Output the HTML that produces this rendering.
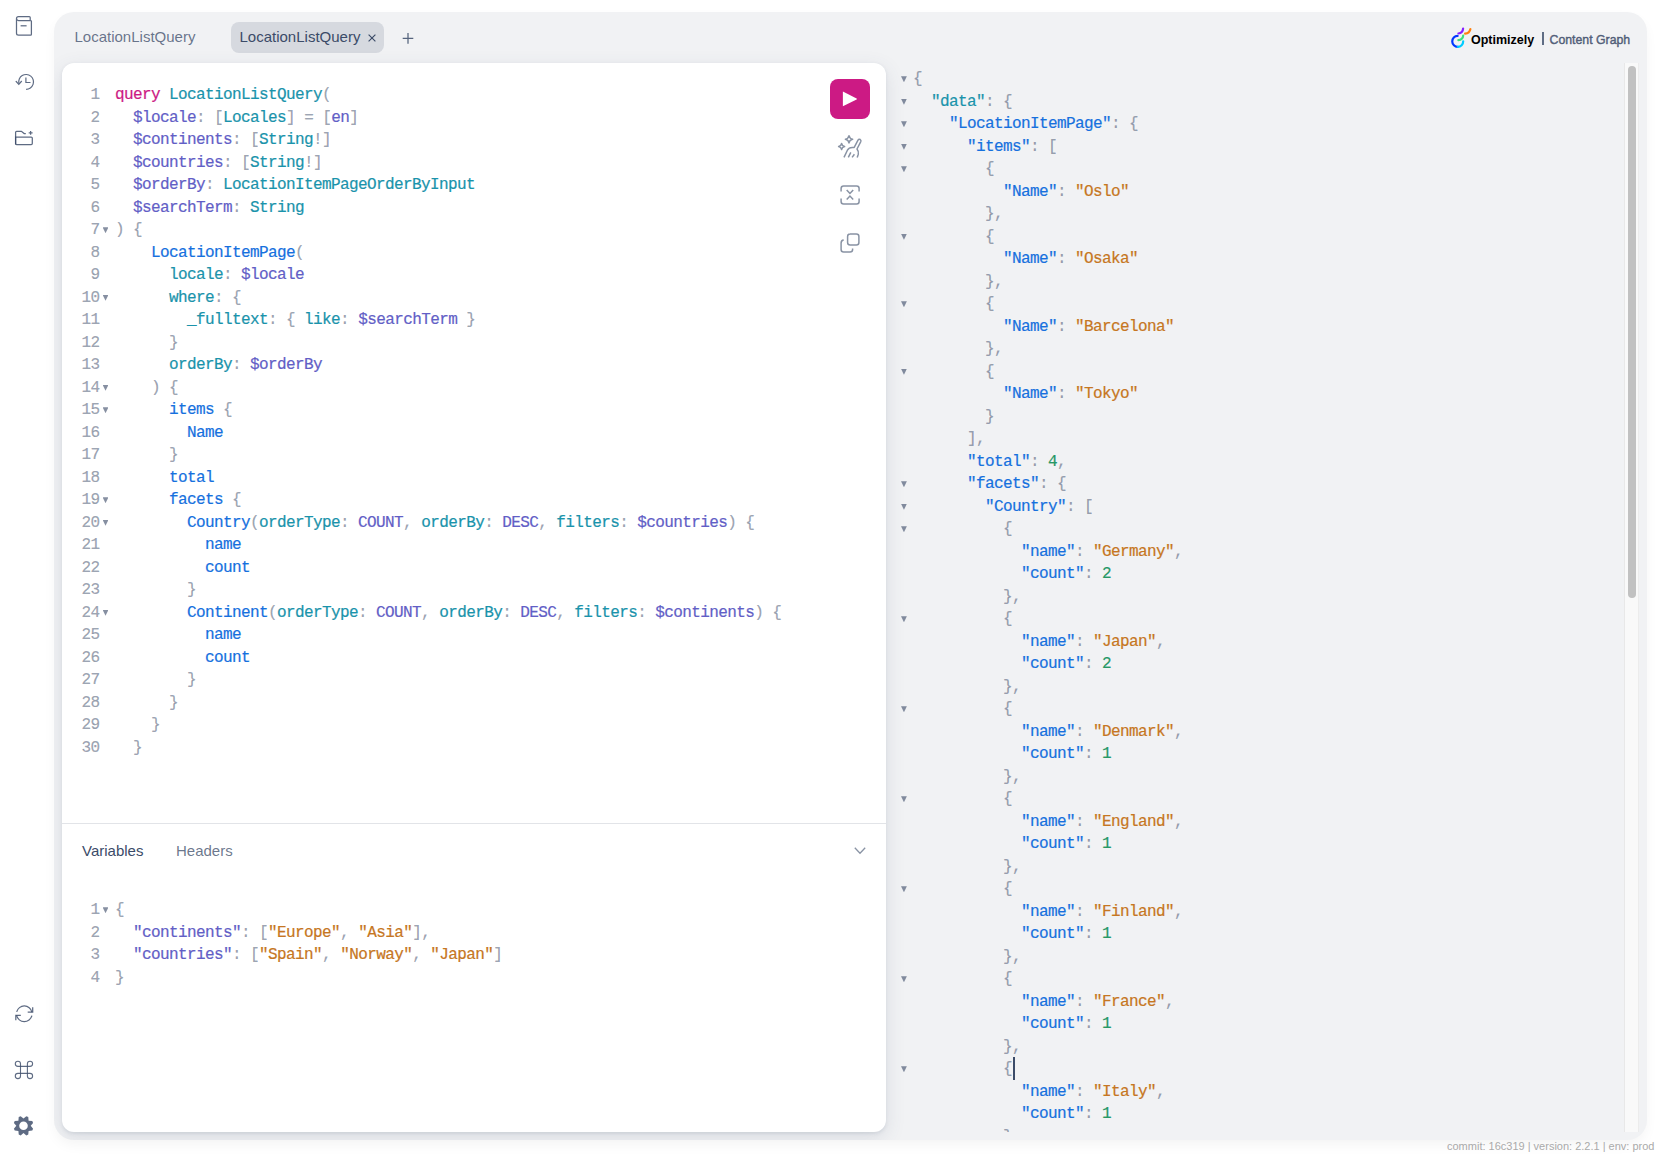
<!DOCTYPE html>
<html><head><meta charset="utf-8"><title>GraphiQL</title>
<style>
*{box-sizing:border-box;margin:0;padding:0}
html,body{width:1659px;height:1156px;overflow:hidden;background:#fff}
body{position:relative;font-family:"Liberation Sans",sans-serif;color:rgb(59,75,104)}
.abs{position:absolute}
.sidebar svg{position:absolute;overflow:visible}
.sessions{position:absolute;left:54px;top:12px;width:1593px;height:1128px;border-radius:20px;background:rgb(241,242,244);box-shadow:0 6px 14px -2px rgba(0,0,0,.05)}
.tab{position:absolute;font-size:15px;line-height:17px;white-space:nowrap}
.tab1{left:74.5px;top:27.7px;color:rgba(59,75,104,.76)}
.tab2bg{position:absolute;left:231px;top:22px;width:153px;height:31px;border-radius:8px;background:rgb(214,217,223)}
.tab2{left:239.5px;top:27.7px;color:rgb(59,75,104)}
.editors{position:absolute;left:62px;top:63px;width:824px;height:1069px;border-radius:12px;background:#fff;box-shadow:0px 6px 20px rgba(59,76,106,.13),0px 1.2px 3.6px rgba(59,76,106,.1);overflow:hidden;clip-path:inset(-51px -200px -8px -8px round 20px)}
.qsep{position:absolute;left:0;top:760px;width:824px;height:1px;background:rgb(226,228,232)}
.ln{position:absolute;left:0;height:22.5px;line-height:22.5px;font-family:"Liberation Mono",monospace;font-size:16px;letter-spacing:-0.6px;white-space:pre;-webkit-text-stroke:0.2px currentColor}
.num{position:absolute;left:0;width:37.6px;text-align:right;color:rgba(59,75,104,.5)}
.fold{position:absolute;left:40.6px;top:8.2px;width:5.9px;height:6px;background:rgba(59,75,104,.62);clip-path:polygon(0 0,100% 0,50% 100%)}
.code{position:absolute;left:53px}
.res .fold{left:15px;width:5.9px}
.res .code{left:27px}
.k{color:rgb(204,26,132)}
.d{color:rgb(26,147,171)}
.p{color:rgb(22,112,222)}
.a{color:rgb(26,147,171)}
.t{color:rgb(26,147,171)}
.v{color:rgb(98,94,198)}
.e{color:rgb(98,94,198)}
.u{color:rgba(59,75,104,.5)}
.s{color:rgb(198,118,34)}
.n{color:rgb(38,152,102)}
.qlines{position:absolute;left:0;top:21px}
.vlines{position:absolute;left:0;top:836px}
.response{position:absolute;left:886px;top:63px;width:753px;height:1069px;overflow:hidden}
.res{position:absolute;left:0;top:5px}
.toolbar svg{position:absolute;overflow:visible}
.play{position:absolute;left:768px;top:16px;width:40px;height:40px;border-radius:8px;background:rgb(204,26,132)}
.etab{position:absolute;top:778.7px;font-size:15px;line-height:17px}
.scrolltrack{position:absolute;left:1624px;top:63px;width:15px;height:1069px;background:#f9f9f9;border-left:1px solid #e8e8e8;border-right:1px solid #ececec}
.thumb{position:absolute;left:1628px;top:66px;width:8px;height:532px;border-radius:4px;background:#c1c1c1}
.cursor{position:absolute;left:1013px;top:1057px;width:2px;height:22.5px;background:rgb(59,75,104)}
.footer{position:absolute;left:1447px;top:1140px;font-size:11px;line-height:13px;color:#aaa;white-space:nowrap}
.brand{position:absolute;left:1471px;top:32.5px;font-size:12.5px;font-weight:700;color:#000;line-height:14px}
.brandsep{position:absolute;left:1542px;top:32px;width:1.8px;height:12.6px;background:rgba(59,75,104,.8)}
.cg{position:absolute;left:1549.5px;top:32.6px;font-size:12.3px;font-weight:400;-webkit-text-stroke:0.5px rgba(59,75,104,.8);color:rgba(59,75,104,.8);line-height:14px;white-space:nowrap}

</style></head><body>
<div class="sidebar">
<svg style="left:0;top:0" width="48" height="160" viewBox="0 0 48 160" fill="none" stroke="rgba(59,75,104,.82)" stroke-width="1.25">
  <path d="M16.5 18.6C16.5 19.7 17.4 20.5 18.5 20.5H30.2M16.5 18.6C16.5 17.5 17.4 16.5 18.5 16.5H29.3C29.8 16.5 30.2 16.9 30.2 17.4V20.5M16.5 18.6V33.3C16.5 34.3 17.4 35.2 18.5 35.2H30.6C31.1 35.2 31.4 34.8 31.4 34.3V21.3C31.4 20.9 31.1 20.5 30.6 20.5H30.2"/>
  <line x1="20.6" y1="25.8" x2="26.6" y2="25.8"/>
  <g transform="translate(14.9 73.9) scale(0.8)" stroke-width="1.5">
   <path d="M1.59375 9.52344L4.87259 12.9944L8.07872 9.41249" stroke-linecap="square"/>
   <path d="M13.75 5.25V10.75H18.75" stroke-linecap="square"/>
   <path d="M4.95427 11.9332C4.55457 10.0629 4.74441 8.11477 5.49765 6.35686C6.25089 4.59894 7.5305 3.11772 9.16034 2.11709C10.7902 1.11647 12.6901 0.645626 14.5986 0.769388C16.5071 0.893151 18.3303 1.60543 19.8172 2.80818C21.3042 4.01093 22.3809 5.64501 22.8997 7.48548C23.4185 9.32595 23.3541 11.2823 22.7153 13.0848C22.0765 14.8873 20.8944 16.4474 19.3317 17.5496C17.7691 18.6518 15.9031 19.2421 13.9907 19.2421"/>
  </g>
  <path d="M15.6 144.5V132.3C15.6 131.7 16 131.3 16.6 131.3H21.4L24.2 133.6H25.8"/>
  <path d="M15.6 137H31.2C31.8 137 32.3 137.5 32.3 138.1V143.5C32.3 144.1 31.8 144.5 31.2 144.5H16.6C16 144.5 15.6 144.1 15.6 143.5Z"/>
  <path d="M30.6 130.9V134.8M28.7 132.9H32.6"/>
</svg>
<svg style="left:0;top:990px" width="48" height="160" viewBox="0 990 48 160" fill="none" stroke="rgba(59,75,104,.82)">
  <g transform="translate(14.26 1003.8) scale(1.25)" stroke-width="1">
   <path d="M4.75 9.25H1.25V12.75" stroke-linecap="square"/>
   <path d="M11.25 6.75H14.75V3.25" stroke-linecap="square"/>
   <path d="M14.1036 6.65539C13.8 5.27698 13.0387 4.04193 11.9437 3.15131C10.8487 2.26069 9.48447 1.76694 8.0731 1.75043C6.66173 1.73392 5.28633 2.19563 4.17079 3.06046C3.05526 3.92529 2.26529 5.14184 1.92947 6.513"/>
   <path d="M1.89623 9.34461C2.19983 10.723 2.96106 11.9581 4.05607 12.8487C5.15107 13.7393 6.51536 14.2331 7.92673 14.2496C9.3381 14.2661 10.7135 13.8044 11.829 12.9395C12.9446 12.0747 13.7345 10.8582 14.0704 9.487"/>
  </g>
  <g stroke-width="1.1">
   <path d="M20.5 1066.4H27.4V1073.4H20.5Z"/>
   <path d="M20.5 1066.4V1063.8A2.6 2.6 0 1 0 17.9 1066.4H20.5"/>
   <path d="M27.4 1066.4V1063.8A2.6 2.6 0 1 1 30 1066.4H27.4"/>
   <path d="M20.5 1073.4V1076A2.6 2.6 0 1 1 17.9 1073.4H20.5"/>
   <path d="M27.4 1073.4V1076A2.6 2.6 0 1 0 30 1073.4H27.4"/>
  </g>
  <path id="gear" fill="rgba(59,75,104,.82)" stroke="none" fill-rule="evenodd" d="M26.34 1116.21 L28.27 1117.01 L28.59 1120.71 L32.29 1121.03 L33.09 1122.96 L30.70 1125.80 L33.09 1128.64 L32.29 1130.57 L28.59 1130.89 L28.27 1134.59 L26.34 1135.39 L23.50 1133.00 L20.66 1135.39 L18.73 1134.59 L18.41 1130.89 L14.71 1130.57 L13.91 1128.64 L16.30 1125.80 L13.91 1122.96 L14.71 1121.03 L18.41 1120.71 L18.73 1117.01 L20.66 1116.21 L23.50 1118.60Z M27.8 1125.8 A4.3 4.3 0 1 0 19.2 1125.8 A4.3 4.3 0 1 0 27.8 1125.8Z"/>
</svg>
</div>
<div class="sessions"></div>
<div class="tab tab1">LocationListQuery</div>
<div class="tab2bg"></div>
<div class="tab tab2">LocationListQuery</div>
<svg class="abs" style="left:0;top:0" width="1659" height="60" fill="none" stroke="rgb(59,75,104)">
  <path d="M368.6 34.6L375.4 41.4M375.4 34.6L368.6 41.4" stroke-width="1.15"/>
  <path d="M408 33V43.7M402.7 38.3H413.3" stroke-width="1.25" stroke="rgba(59,75,104,.85)"/>
</svg>
<div class="editors">
  <div class="qlines">
<div class="ln" style="top:0.0px"><span class="num">1</span><span class="code"><span class="k">query</span> <span class="d">LocationListQuery</span><span class="u">(</span></span></div>
<div class="ln" style="top:22.5px"><span class="num">2</span><span class="code">  <span class="v">$locale</span><span class="u">:</span> <span class="u">[</span><span class="t">Locales</span><span class="u">]</span> <span class="u">=</span> <span class="u">[</span><span class="e">en</span><span class="u">]</span></span></div>
<div class="ln" style="top:45.0px"><span class="num">3</span><span class="code">  <span class="v">$continents</span><span class="u">:</span> <span class="u">[</span><span class="t">String</span><span class="u">!]</span></span></div>
<div class="ln" style="top:67.5px"><span class="num">4</span><span class="code">  <span class="v">$countries</span><span class="u">:</span> <span class="u">[</span><span class="t">String</span><span class="u">!]</span></span></div>
<div class="ln" style="top:90.0px"><span class="num">5</span><span class="code">  <span class="v">$orderBy</span><span class="u">:</span> <span class="t">LocationItemPageOrderByInput</span></span></div>
<div class="ln" style="top:112.5px"><span class="num">6</span><span class="code">  <span class="v">$searchTerm</span><span class="u">:</span> <span class="t">String</span></span></div>
<div class="ln" style="top:135.0px"><span class="num">7</span><span class="fold"></span><span class="code"><span class="u">)</span> <span class="u">{</span></span></div>
<div class="ln" style="top:157.5px"><span class="num">8</span><span class="code">    <span class="p">LocationItemPage</span><span class="u">(</span></span></div>
<div class="ln" style="top:180.0px"><span class="num">9</span><span class="code">      <span class="a">locale</span><span class="u">:</span> <span class="v">$locale</span></span></div>
<div class="ln" style="top:202.5px"><span class="num">10</span><span class="fold"></span><span class="code">      <span class="a">where</span><span class="u">:</span> <span class="u">{</span></span></div>
<div class="ln" style="top:225.0px"><span class="num">11</span><span class="code">        <span class="a">_fulltext</span><span class="u">:</span> <span class="u">{</span> <span class="a">like</span><span class="u">:</span> <span class="v">$searchTerm</span> <span class="u">}</span></span></div>
<div class="ln" style="top:247.5px"><span class="num">12</span><span class="code">      <span class="u">}</span></span></div>
<div class="ln" style="top:270.0px"><span class="num">13</span><span class="code">      <span class="a">orderBy</span><span class="u">:</span> <span class="v">$orderBy</span></span></div>
<div class="ln" style="top:292.5px"><span class="num">14</span><span class="fold"></span><span class="code">    <span class="u">)</span> <span class="u">{</span></span></div>
<div class="ln" style="top:315.0px"><span class="num">15</span><span class="fold"></span><span class="code">      <span class="p">items</span> <span class="u">{</span></span></div>
<div class="ln" style="top:337.5px"><span class="num">16</span><span class="code">        <span class="p">Name</span></span></div>
<div class="ln" style="top:360.0px"><span class="num">17</span><span class="code">      <span class="u">}</span></span></div>
<div class="ln" style="top:382.5px"><span class="num">18</span><span class="code">      <span class="p">total</span></span></div>
<div class="ln" style="top:405.0px"><span class="num">19</span><span class="fold"></span><span class="code">      <span class="p">facets</span> <span class="u">{</span></span></div>
<div class="ln" style="top:427.5px"><span class="num">20</span><span class="fold"></span><span class="code">        <span class="p">Country</span><span class="u">(</span><span class="a">orderType</span><span class="u">:</span> <span class="e">COUNT</span><span class="u">,</span> <span class="a">orderBy</span><span class="u">:</span> <span class="e">DESC</span><span class="u">,</span> <span class="a">filters</span><span class="u">:</span> <span class="v">$countries</span><span class="u">)</span> <span class="u">{</span></span></div>
<div class="ln" style="top:450.0px"><span class="num">21</span><span class="code">          <span class="p">name</span></span></div>
<div class="ln" style="top:472.5px"><span class="num">22</span><span class="code">          <span class="p">count</span></span></div>
<div class="ln" style="top:495.0px"><span class="num">23</span><span class="code">        <span class="u">}</span></span></div>
<div class="ln" style="top:517.5px"><span class="num">24</span><span class="fold"></span><span class="code">        <span class="p">Continent</span><span class="u">(</span><span class="a">orderType</span><span class="u">:</span> <span class="e">COUNT</span><span class="u">,</span> <span class="a">orderBy</span><span class="u">:</span> <span class="e">DESC</span><span class="u">,</span> <span class="a">filters</span><span class="u">:</span> <span class="v">$continents</span><span class="u">)</span> <span class="u">{</span></span></div>
<div class="ln" style="top:540.0px"><span class="num">25</span><span class="code">          <span class="p">name</span></span></div>
<div class="ln" style="top:562.5px"><span class="num">26</span><span class="code">          <span class="p">count</span></span></div>
<div class="ln" style="top:585.0px"><span class="num">27</span><span class="code">        <span class="u">}</span></span></div>
<div class="ln" style="top:607.5px"><span class="num">28</span><span class="code">      <span class="u">}</span></span></div>
<div class="ln" style="top:630.0px"><span class="num">29</span><span class="code">    <span class="u">}</span></span></div>
<div class="ln" style="top:652.5px"><span class="num">30</span><span class="code">  <span class="u">}</span></span></div>
  </div>
  <div class="play"></div>
  <svg class="abs" style="left:0;top:0" width="824" height="300" fill="none" stroke="rgba(59,75,104,.6)" stroke-width="1.5">
    <path d="M780.9 28.5L794.6 35.4Q795.4 35.9 794.6 36.4L780.9 43.3Z" fill="#fff" stroke="none"/>
    <g transform="translate(768 64)">
      <path d="M19 8.7Q19.6 11.7 22.6 12.3Q19.6 12.9 19 15.9Q18.4 12.9 15.4 12.3Q18.4 11.7 19 8.7Z" stroke-linejoin="round"/>
      <path d="M11.6 16.5Q12.1 19 14.6 19.55Q12.1 20.1 11.6 22.6Q11.1 20.1 8.6 19.55Q11.1 19 11.6 16.5Z" stroke-linejoin="round"/>
      <path d="M14 30.4L17.4 23.2Q19 20.3 22.5 20.4H24.2L28 13.2Q28.8 11.8 30.2 12.5Q31.3 13.3 30.8 14.6L27 22Q28.9 24.4 28.3 27.2L27.2 30.4" stroke-linejoin="round"/>
      <path d="M20.8 25.4L18.3 30.4M24.4 27.3L22.1 30.4"/>
    </g>
    <g transform="translate(768 112)">
      <path d="M11.1 16.6V13.6Q11.1 11.1 13.6 11.1H26.6Q29.1 11.1 29.1 13.6V16.6M11.1 23.4V26.4Q11.1 28.9 13.6 28.9H26.6Q29.1 28.9 29.1 26.4V23.4"/>
      <path d="M16.7 14.9L19.95 18.5L23.2 14.9M16.7 24.6L19.95 21.1L23.2 24.6"/>
    </g>
    <g transform="translate(768 160)">
      <path d="M20 11.1H26.4Q28.9 11.1 28.9 13.6V19.6Q28.9 22.1 26.4 22.1H20.1Q17.6 22.1 17.6 19.6V13.6Q17.6 11.1 20.1 11.1Z"/>
      <path d="M13.7 17.1Q11.1 17.4 11.1 19.9V26.4Q11.1 28.9 13.6 28.9H20.1Q22.6 28.9 22.6 26.4V25.6"/>
    </g>
  </svg>
  <div class="qsep"></div>
  <div class="etab" style="left:20px;color:rgb(59,75,104)">Variables</div>
  <div class="etab" style="left:114px;color:rgba(59,75,104,.76)">Headers</div>
  <svg class="abs" style="left:0;top:0" width="824" height="900" fill="none" stroke="rgba(59,75,104,.6)" stroke-width="1.3">
    <path d="M792.8 784.8L798 790.3L803.2 784.8"/>
  </svg>
  <div class="vlines">
<div class="ln" style="top:0.0px"><span class="num">1</span><span class="fold"></span><span class="code"><span class="u">{</span></span></div>
<div class="ln" style="top:22.5px"><span class="num">2</span><span class="code">  <span class="v">&quot;continents&quot;</span><span class="u">:</span> <span class="u">[</span><span class="s">&quot;Europe&quot;</span><span class="u">,</span> <span class="s">&quot;Asia&quot;</span><span class="u">],</span></span></div>
<div class="ln" style="top:45.0px"><span class="num">3</span><span class="code">  <span class="v">&quot;countries&quot;</span><span class="u">:</span> <span class="u">[</span><span class="s">&quot;Spain&quot;</span><span class="u">,</span> <span class="s">&quot;Norway&quot;</span><span class="u">,</span> <span class="s">&quot;Japan&quot;</span><span class="u">]</span></span></div>
<div class="ln" style="top:67.5px"><span class="num">4</span><span class="code"><span class="u">}</span></span></div>
  </div>
</div>
<div class="response">
  <div class="res">
<div class="ln" style="top:0.0px"><span class="fold"></span><span class="code"><span class="u">{</span></span></div>
<div class="ln" style="top:22.5px"><span class="fold"></span><span class="code">  <span class="d">&quot;data&quot;</span><span class="u">:</span> <span class="u">{</span></span></div>
<div class="ln" style="top:45.0px"><span class="fold"></span><span class="code">    <span class="p">&quot;LocationItemPage&quot;</span><span class="u">:</span> <span class="u">{</span></span></div>
<div class="ln" style="top:67.5px"><span class="fold"></span><span class="code">      <span class="p">&quot;items&quot;</span><span class="u">:</span> <span class="u">[</span></span></div>
<div class="ln" style="top:90.0px"><span class="fold"></span><span class="code">        <span class="u">{</span></span></div>
<div class="ln" style="top:112.5px"><span class="code">          <span class="p">&quot;Name&quot;</span><span class="u">:</span> <span class="s">&quot;Oslo&quot;</span></span></div>
<div class="ln" style="top:135.0px"><span class="code">        <span class="u">},</span></span></div>
<div class="ln" style="top:157.5px"><span class="fold"></span><span class="code">        <span class="u">{</span></span></div>
<div class="ln" style="top:180.0px"><span class="code">          <span class="p">&quot;Name&quot;</span><span class="u">:</span> <span class="s">&quot;Osaka&quot;</span></span></div>
<div class="ln" style="top:202.5px"><span class="code">        <span class="u">},</span></span></div>
<div class="ln" style="top:225.0px"><span class="fold"></span><span class="code">        <span class="u">{</span></span></div>
<div class="ln" style="top:247.5px"><span class="code">          <span class="p">&quot;Name&quot;</span><span class="u">:</span> <span class="s">&quot;Barcelona&quot;</span></span></div>
<div class="ln" style="top:270.0px"><span class="code">        <span class="u">},</span></span></div>
<div class="ln" style="top:292.5px"><span class="fold"></span><span class="code">        <span class="u">{</span></span></div>
<div class="ln" style="top:315.0px"><span class="code">          <span class="p">&quot;Name&quot;</span><span class="u">:</span> <span class="s">&quot;Tokyo&quot;</span></span></div>
<div class="ln" style="top:337.5px"><span class="code">        <span class="u">}</span></span></div>
<div class="ln" style="top:360.0px"><span class="code">      <span class="u">],</span></span></div>
<div class="ln" style="top:382.5px"><span class="code">      <span class="p">&quot;total&quot;</span><span class="u">:</span> <span class="n">4</span><span class="u">,</span></span></div>
<div class="ln" style="top:405.0px"><span class="fold"></span><span class="code">      <span class="p">&quot;facets&quot;</span><span class="u">:</span> <span class="u">{</span></span></div>
<div class="ln" style="top:427.5px"><span class="fold"></span><span class="code">        <span class="p">&quot;Country&quot;</span><span class="u">:</span> <span class="u">[</span></span></div>
<div class="ln" style="top:450.0px"><span class="fold"></span><span class="code">          <span class="u">{</span></span></div>
<div class="ln" style="top:472.5px"><span class="code">            <span class="p">&quot;name&quot;</span><span class="u">:</span> <span class="s">&quot;Germany&quot;</span><span class="u">,</span></span></div>
<div class="ln" style="top:495.0px"><span class="code">            <span class="p">&quot;count&quot;</span><span class="u">:</span> <span class="n">2</span></span></div>
<div class="ln" style="top:517.5px"><span class="code">          <span class="u">},</span></span></div>
<div class="ln" style="top:540.0px"><span class="fold"></span><span class="code">          <span class="u">{</span></span></div>
<div class="ln" style="top:562.5px"><span class="code">            <span class="p">&quot;name&quot;</span><span class="u">:</span> <span class="s">&quot;Japan&quot;</span><span class="u">,</span></span></div>
<div class="ln" style="top:585.0px"><span class="code">            <span class="p">&quot;count&quot;</span><span class="u">:</span> <span class="n">2</span></span></div>
<div class="ln" style="top:607.5px"><span class="code">          <span class="u">},</span></span></div>
<div class="ln" style="top:630.0px"><span class="fold"></span><span class="code">          <span class="u">{</span></span></div>
<div class="ln" style="top:652.5px"><span class="code">            <span class="p">&quot;name&quot;</span><span class="u">:</span> <span class="s">&quot;Denmark&quot;</span><span class="u">,</span></span></div>
<div class="ln" style="top:675.0px"><span class="code">            <span class="p">&quot;count&quot;</span><span class="u">:</span> <span class="n">1</span></span></div>
<div class="ln" style="top:697.5px"><span class="code">          <span class="u">},</span></span></div>
<div class="ln" style="top:720.0px"><span class="fold"></span><span class="code">          <span class="u">{</span></span></div>
<div class="ln" style="top:742.5px"><span class="code">            <span class="p">&quot;name&quot;</span><span class="u">:</span> <span class="s">&quot;England&quot;</span><span class="u">,</span></span></div>
<div class="ln" style="top:765.0px"><span class="code">            <span class="p">&quot;count&quot;</span><span class="u">:</span> <span class="n">1</span></span></div>
<div class="ln" style="top:787.5px"><span class="code">          <span class="u">},</span></span></div>
<div class="ln" style="top:810.0px"><span class="fold"></span><span class="code">          <span class="u">{</span></span></div>
<div class="ln" style="top:832.5px"><span class="code">            <span class="p">&quot;name&quot;</span><span class="u">:</span> <span class="s">&quot;Finland&quot;</span><span class="u">,</span></span></div>
<div class="ln" style="top:855.0px"><span class="code">            <span class="p">&quot;count&quot;</span><span class="u">:</span> <span class="n">1</span></span></div>
<div class="ln" style="top:877.5px"><span class="code">          <span class="u">},</span></span></div>
<div class="ln" style="top:900.0px"><span class="fold"></span><span class="code">          <span class="u">{</span></span></div>
<div class="ln" style="top:922.5px"><span class="code">            <span class="p">&quot;name&quot;</span><span class="u">:</span> <span class="s">&quot;France&quot;</span><span class="u">,</span></span></div>
<div class="ln" style="top:945.0px"><span class="code">            <span class="p">&quot;count&quot;</span><span class="u">:</span> <span class="n">1</span></span></div>
<div class="ln" style="top:967.5px"><span class="code">          <span class="u">},</span></span></div>
<div class="ln" style="top:990.0px"><span class="fold"></span><span class="code">          <span class="u">{</span></span></div>
<div class="ln" style="top:1012.5px"><span class="code">            <span class="p">&quot;name&quot;</span><span class="u">:</span> <span class="s">&quot;Italy&quot;</span><span class="u">,</span></span></div>
<div class="ln" style="top:1035.0px"><span class="code">            <span class="p">&quot;count&quot;</span><span class="u">:</span> <span class="n">1</span></span></div>
<div class="ln" style="top:1057.5px"><span class="code">          <span class="u">},</span></span></div>
<div class="ln" style="top:1080.0px"><span class="fold"></span><span class="code">          <span class="u">{</span></span></div>
<div class="ln" style="top:1102.5px"><span class="code">            <span class="p">&quot;name&quot;</span><span class="u">:</span> <span class="s">&quot;Norway&quot;</span><span class="u">,</span></span></div>
<div class="ln" style="top:1125.0px"><span class="code">            <span class="p">&quot;count&quot;</span><span class="u">:</span> <span class="n">1</span></span></div>
<div class="ln" style="top:1147.5px"><span class="code">          <span class="u">},</span></span></div>
  </div>
</div>
<div class="scrolltrack"></div>
<div class="thumb"></div>
<div class="cursor"></div>
<svg class="abs" style="left:1440px;top:20px" width="40" height="40" fill="none" stroke-width="2.2" stroke-linecap="round">
  <path d="M17.6 15.9A5.4 5.4 0 0 0 17.8 26.8" stroke="#0037ff"/>
  <path d="M17.8 26.8A5.4 5.4 0 0 0 23.2 21.3" stroke="#00ccff"/>
  <path d="M18.4 20.1Q22.8 19.6 23.2 15.6" stroke="#3be081"/>
  <path d="M18.4 13.5Q22.8 13 23.1 8.7" stroke="#8720ff"/>
  <path d="M25.1 13.7Q29.6 13.2 30.4 9" stroke="#ff8110"/>
</svg>
<div class="brand">Optimizely</div>
<div class="brandsep"></div>
<div class="cg">Content Graph</div>
<div class="footer">commit: 16c319 | version: 2.2.1 | env: prod</div>

</body></html>
